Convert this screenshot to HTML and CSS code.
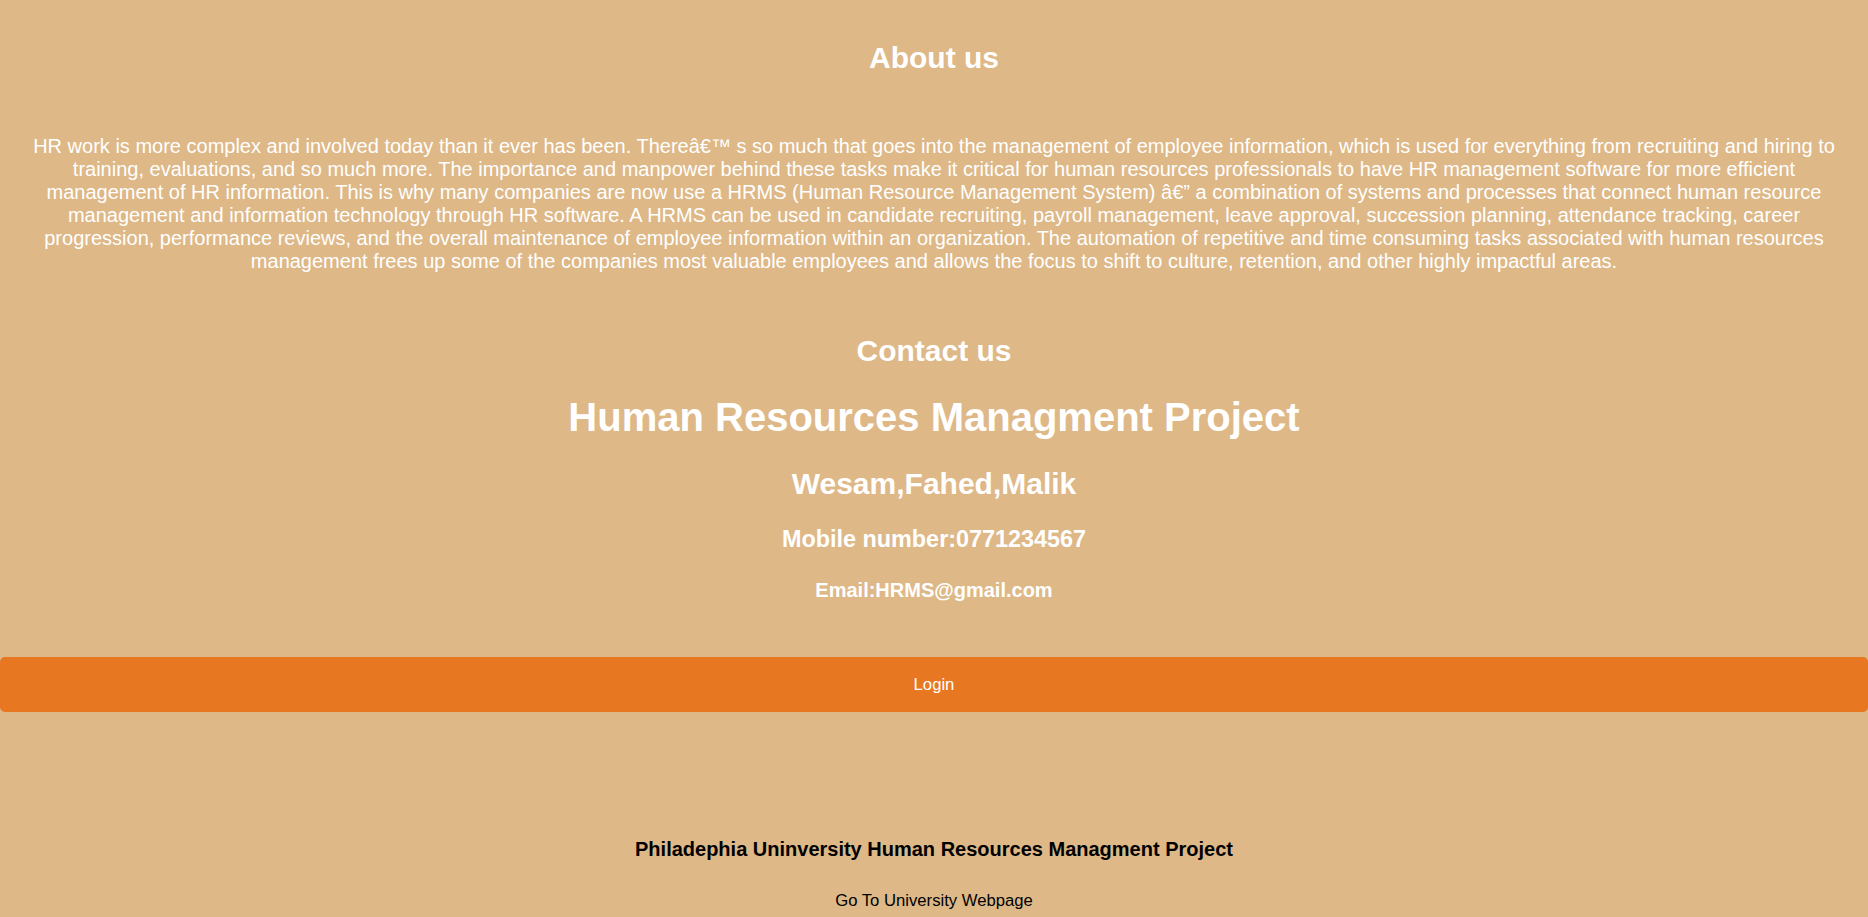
FILE: index.html
```html
<!DOCTYPE html>
<html lang="en">
<head>
<meta charset="utf-8">
<title>About us</title>
<link rel="stylesheet" href="styles.css">
</head>
<body class="page">
  <section class="about">
    <h2 class="section-title">About us</h2>
    <p class="about-text">HR work is more complex and involved today than it ever has been. Thereâ€™ s so much that goes into the management of employee information, which is used for everything from recruiting and hiring to training, evaluations, and so much more. The importance and manpower behind these tasks make it critical for human resources professionals to have HR management software for more efficient management of HR information. This is why many companies are now use a HRMS (Human Resource Management System) â€” a combination of systems and processes that connect human resource management and information technology through HR software. A HRMS can be used in candidate recruiting, payroll management, leave approval, succession planning, attendance tracking, career progression, performance reviews, and the overall maintenance of employee information within an organization. The automation of repetitive and time consuming tasks associated with human resources management frees up some of the companies most valuable employees and allows the focus to shift to culture, retention, and other highly impactful areas.</p>
  </section>
  <section class="contact">
    <h2 class="section-title contact-title">Contact us</h2>
    <h1 class="project-title">Human Resources Managment Project</h1>
    <h2 class="names">Wesam,Fahed,Malik</h2>
    <h3 class="mobile">Mobile number:0771234567</h3>
    <h4 class="email">Email:HRMS@gmail.com</h4>
  </section>
  <button class="login-btn" type="button">Login</button>
  <footer class="footer">
    <h4 class="footer-title">Philadephia Uninversity Human Resources Managment Project</h4>
    <p class="footer-link">Go To University Webpage</p>
  </footer>
</body>
</html>
```
FILE: styles.css
```css
html, body {
  margin: 0;
  padding: 0;
}

.page {
  background: #deb887;
  font-family: "Liberation Sans", Arial, sans-serif;
  color: #ffffff;
  text-align: center;
  padding-top: 41px;
  min-height: 100vh;
  box-sizing: border-box;
}

.about,
.contact,
.footer {
  display: flex;
  flex-direction: column;
  align-items: stretch;
}

.section-title {
  margin: 0;
  font-size: 30px;
  line-height: 34px;
  font-weight: bold;
}

.about-text {
  margin: 60px 0 0;
  padding: 0 22px;
  font-size: 20px;
  line-height: 23px;
}

.contact {
  margin-top: 61px;
}

.project-title {
  margin: 26px 0 0;
  font-size: 40px;
  line-height: 46px;
  font-weight: bold;
}

.names {
  margin: 27px 0 0;
  font-size: 30px;
  line-height: 34px;
  font-weight: bold;
}

.mobile {
  margin: 25px 0 0;
  font-size: 23.4px;
  line-height: 27px;
  font-weight: bold;
}

.email {
  margin: 26px 0 0;
  font-size: 20px;
  line-height: 23px;
  font-weight: bold;
}

.login-btn {
  display: block;
  width: 100%;
  margin: 55px 0 0;
  padding: 18px 0;
  border: none;
  border-radius: 5px;
  background: #e87722;
  color: #ffffff;
  font-family: "Liberation Sans", Arial, sans-serif;
  font-size: 16.67px;
  line-height: 19px;
  cursor: pointer;
}

.footer {
  margin-top: 126px;
  color: #000000;
}

.footer-title {
  margin: 0;
  font-size: 20px;
  line-height: 23px;
  font-weight: bold;
}

.footer-link {
  margin: 30px 0 0;
  font-size: 16.67px;
  line-height: 19px;
}
```
